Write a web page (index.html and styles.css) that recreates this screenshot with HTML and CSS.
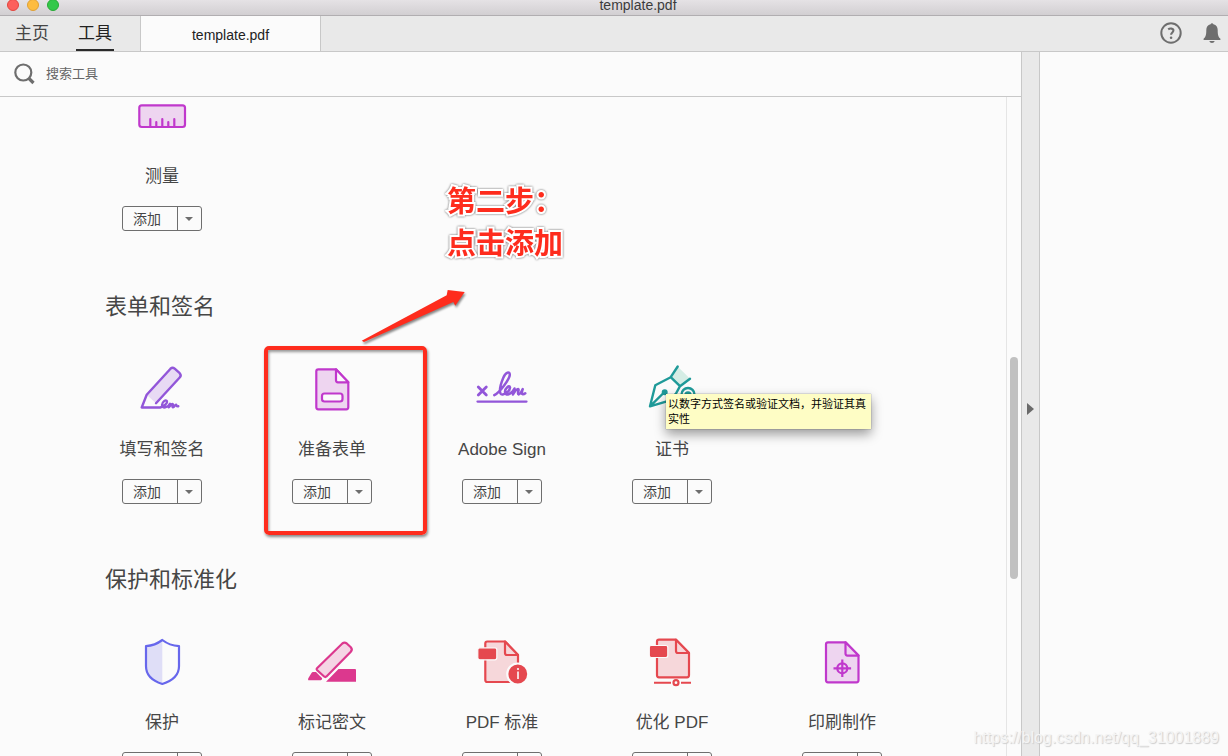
FILE: index.html
```html
<!DOCTYPE html>
<html lang="zh-CN">
<head>
<meta charset="utf-8">
<title>template.pdf</title>
<link rel="stylesheet" href="styles.css">
</head>
<body>
<div class="window">
  <header class="titlebar">
    <div class="lights">
      <button class="light close" aria-label="关闭"></button>
      <button class="light minimize" aria-label="最小化"></button>
      <button class="light expand" aria-label="缩放"></button>
    </div>
    <span class="window-title">template.pdf</span>
  </header>
  <nav class="tabbar">
    <button class="nav-tab">主页</button>
    <button class="nav-tab current"><span>工具</span></button>
    <button class="doc-tab">template.pdf</button>
    <div class="actions">
      <button class="icon-button" aria-label="帮助">
        <svg width="22" height="22" viewBox="0 0 22 22" fill="none" stroke="#6e6e6e" stroke-width="2"><circle cx="11" cy="11" r="9.700"/><path d="M8.200 7.400c1.800-1.400 5.200-1 5.200 1.200 0 1.800-2.300 1.900-2.300 4.200" stroke-width="2.100"/><circle cx="11.100" cy="15.700" r="1.300" fill="#6e6e6e" stroke="none"/></svg>
      </button>
      <button class="icon-button" aria-label="通知">
        <svg width="18" height="22" viewBox="0 0 18 22" fill="#6e6e6e"><path d="M7.600 2.300a1.500 1.500 0 0 1 2.800 0c2.900.7 4.300 2.800 4.300 5.700 0 4.900.6 7.200 2.700 8.700V18H.6v-1.300C2.700 15.200 3.300 12.900 3.300 8c0-2.900 1.400-5 4.300-5.700z"/><path d="M6.300 19h5.400c-.4 1.200-1.400 2-2.700 2s-2.300-.8-2.700-2z"/></svg>
      </button>
    </div>
  </nav>
  <div class="workspace">
    <main class="tools">
      <label class="search">
        <svg width="22" height="22" viewBox="0 0 22 22" fill="none" stroke="#6e6e6e"><circle cx="9.300" cy="9.500" r="8" stroke-width="2.200"/><path d="M14.500 15l5 5" stroke-width="3.200"/></svg>
        <input class="search-box" type="text" placeholder="搜索工具" aria-label="搜索工具">
      </label>
      <div class="scroller">
        <div class="catalog">
          <section class="grid">
            <article class="tool">
              <svg class="tool-icon" viewBox="0 0 56 50" fill="none" stroke="#c038cc" stroke-width="2.200" stroke-linecap="round"><rect x="5.300" y="14.300" width="45.700" height="21.700" rx="2.500" fill="#eed5f0"/><path d="M16.300 28v7M22.300 31v4M28.300 28v7M34.300 31v4M40.300 28v7"/></svg>
              <h3 class="tool-name">测量</h3>
              <div class="split"><button class="add">添加</button><button class="more" aria-label="更多选项"></button></div>
            </article>
          </section>
          <h2 class="section-title">表单和签名</h2>
          <section class="grid">
            <article class="tool">
              <svg class="tool-icon" viewBox="0 0 56 50" fill="none" stroke="#9256d9" stroke-width="2.400" stroke-linecap="round" stroke-linejoin="round"><path d="M12.700 30.800L36.500 4.700q2-2 4.200 0l5 4.500q2 2.200 0 4.300L22 39.200z" fill="#e8daf4" stroke="none"/><path d="M22 39.200l23.700-25.700q2-2.100 0-4.300l-5-4.500q-2.200-2-4.200 0L12.700 30.800l-5 12.700h18.500c4-1 7.500-4.300 6.800-6.300-1-2.300-5 .8-5 3.800 0 4.200 6 2.500 8-1.300l-1.200 3.600c1-1.300 2.500-3.300 3.700-3.300s-.8 3 .5 3.300c1.200.2 1.800-2.600 3-2.600.8 0 .1 2 2.300 1.600"/></svg>
              <h3 class="tool-name">填写和签名</h3>
              <div class="split"><button class="add">添加</button><button class="more" aria-label="更多选项"></button></div>
            </article>
            <article class="tool">
              <svg class="tool-icon" viewBox="0 0 56 50" fill="none" stroke="#c038cc" stroke-width="2.200" stroke-linejoin="round"><path d="M14.300 5.300H32l12.300 13v25q0 2-2 2h-28q-2 0-2-2v-36q0-2 2-2z" fill="#eed5f0"/><path d="M32 5.300v11q0 2 2 2h10.300z" fill="#fbfbfb"/><rect x="18" y="29.500" width="20.500" height="8" rx="2.500" fill="#fbfbfb"/></svg>
              <h3 class="tool-name">准备表单</h3>
              <div class="split"><button class="add">添加</button><button class="more" aria-label="更多选项"></button></div>
              <div class="highlight"></div>
            </article>
            <article class="tool">
              <svg class="tool-icon" viewBox="0 0 56 50" fill="none" stroke="#9256d9" stroke-width="2.500" stroke-linecap="round" stroke-linejoin="round"><path d="M4.300 23l8 8M12.300 23l-8 8" stroke-width="2.800"/><path d="M3.500 37.600h49" stroke-width="2.300"/><path d="M20.300 31.200c6-3.500 15.500-16.500 15.500-20.500 0-3.700-4-2.700-6.500 3-2.500 6-4.300 12.500-2.800 15.800 1.800 3.200 10-2.500 9.500-6.300-.6-2.400-5 .8-5 4.600 0 4.700 6.500 3 9.500-3.300l-1.500 6c1.500-2.600 3.800-5.600 5.300-5.400 1.200.3-1.500 4.800.2 5.300 1.600.3 3-3.200 4.200-5.300-.5 2-1.600 5 0 5.200 1.200.1 1.800-.3 2.600-1"/></svg>
              <h3 class="tool-name">Adobe Sign</h3>
              <div class="split"><button class="add">添加</button><button class="more" aria-label="更多选项"></button></div>
            </article>
            <article class="tool">
              <svg class="tool-icon" viewBox="0 0 56 50" fill="none" stroke="#1f9a99" stroke-width="2.400" stroke-linecap="round" stroke-linejoin="round"><path d="M26.700 13.200L33.700 2.500 46 14.800l-10 7.400z" fill="#d5ede5" stroke="none"/><path d="M33.700 2.500l-7 10.700 9.300 9 10-7.400M26.700 13.200l-15.400 8L6 42.300l18.500-5.500L32 29.500l4-7.300M6 42.300l14-13.800"/><circle cx="20.700" cy="28.200" r="1.800" fill="#1f9a99"/><circle cx="44" cy="30.500" r="6.500"/><circle cx="44" cy="31" r="2.500" fill="#1f9a99"/></svg>
              <h3 class="tool-name">证书</h3>
              <div class="split"><button class="add">添加</button><button class="more" aria-label="更多选项"></button></div>
              <div class="tooltip" role="tooltip">以数字方式签名或验证文档，并验证其真实性</div>
            </article>
          </section>
          <h2 class="section-title">保护和标准化</h2>
          <section class="grid">
            <article class="tool">
              <svg class="tool-icon" viewBox="0 0 56 50" fill="none"><path d="M28.300 3Q21 8.500 12 9.200v20C12 38 19 44 28.300 47z" fill="#dfdef7"/><path d="M28.300 3Q21 8.500 12 9.200v20C12 38 19 44 28.300 47 37.500 44 45 38 45 29.200v-20Q35.500 8.500 28.300 3z" stroke="#6767ec" stroke-width="2.200" stroke-linejoin="round"/></svg>
              <h3 class="tool-name">保护</h3>
              <div class="split"><button class="add">添加</button><button class="more" aria-label="更多选项"></button></div>
            </article>
            <article class="tool">
              <svg class="tool-icon" viewBox="0 0 56 50" fill="#dc388e"><path d="M7.500 36q.5-1 1.500-1h3l6.200 6.300q-.2 2-1.500 2H4.300q-.7-1.300.3-2.600zM22 44.800L34.500 32H51q1 0 1 1v11.800z"/><path d="M13 31.200L38.300 6.500q2.200-1.600 4.500 0l4 3.800q2 2.200 0 4.500L22.500 39.500q-1.200 1-2.400 0L13 33q-.8-1 0-1.800z" fill="#f5d5e5" stroke="#dc388e" stroke-width="2.200"/></svg>
              <h3 class="tool-name">标记密文</h3>
              <div class="split"><button class="add">添加</button><button class="more" aria-label="更多选项"></button></div>
            </article>
            <article class="tool">
              <svg class="tool-icon" viewBox="0 0 56 50" fill="none" stroke="#e5484f" stroke-width="2.200" stroke-linejoin="round"><path d="M13.300 4.500H31l13 13.500V45H13.300q-2 0-2-2V6.500q0-2 2-2z" fill="#f6d7da"/><path d="M31 4.500v11.500q0 2 2 2h11z" fill="#f6d7da"/><rect x="3.800" y="10.800" width="19" height="12" rx="2" fill="#e5484f" stroke="#fbfbfb" stroke-width="1.200"/><circle cx="43.800" cy="37" r="10.500" fill="#e5484f" stroke="#fbfbfb"/><path d="M44 34.500V42" stroke="#fbfbfb" stroke-width="1.600"/><circle cx="44" cy="32" r="1.100" fill="#fbfbfb" stroke="none"/></svg>
              <h3 class="tool-name">PDF 标准</h3>
              <div class="split"><button class="add">添加</button><button class="more" aria-label="更多选项"></button></div>
            </article>
            <article class="tool">
              <svg class="tool-icon" viewBox="0 0 56 50" fill="none" stroke="#e5484f" stroke-width="2.200" stroke-linejoin="round"><path d="M15 2.700h17L45 16v22.300q0 2-2 2H15q-2 0-2-2V4.700q0-2 2-2z" fill="#f6d7da"/><path d="M32 2.700V14q0 2 2 2h11z" fill="#f6d7da"/><rect x="5.300" y="8.500" width="18.500" height="12" rx="2" fill="#e5484f" stroke="#fbfbfb" stroke-width="1.200"/><path d="M10 45.700h17M37 45.700h10" stroke-width="2"/><circle cx="32" cy="45.700" r="2.500"/></svg>
              <h3 class="tool-name">优化 PDF</h3>
              <div class="split"><button class="add">添加</button><button class="more" aria-label="更多选项"></button></div>
            </article>
            <article class="tool">
              <svg class="tool-icon" viewBox="0 0 56 50" fill="none" stroke="#c038cc" stroke-width="2.200" stroke-linejoin="round"><path d="M14 5.300h17.500l13 13.300v24.700q0 2-2 2H14q-2 0-2-2v-36q0-2 2-2z" fill="#eed5f0"/><path d="M31.500 5.300v11.300q0 2 2 2h11z" fill="#eed5f0"/><circle cx="28.300" cy="31.300" r="5"/><path d="M28.300 22.500v17.600M19.500 31.300h17.600"/></svg>
              <h3 class="tool-name">印刷制作</h3>
              <div class="split"><button class="add">添加</button><button class="more" aria-label="更多选项"></button></div>
            </article>
          </section>
        </div>
        <div class="track"><div class="thumb"></div></div>
      </div>
    </main>
    <button class="divider" aria-label="展开窗格"><svg width="7" height="12" viewBox="0 0 7 12"><path d="M0 0l7 6-7 6z" fill="#6a6a6a"/></svg></button>
    <aside class="pane"></aside>
  </div>
  <p class="note">第二步：<br>点击添加</p>
  <svg class="pointer" width="110" height="60" viewBox="0 0 110 60"><path d="M1.700 52.700L86.700 7.300 87.700 2l17 2-9.400 13.700-2-3.700L4 54z" fill="#fe2c1d"/></svg>
  <span class="watermark">https://blog.csdn.net/qq_31001889</span>
</div>
</body>
</html>
```
FILE: styles.css
```css
* { box-sizing: border-box; }

body {
  margin: 0;
  font-family: "Liberation Sans", "Noto Sans CJK SC", sans-serif;
  color: #464646;
  background: #fbfbfb;
}

button {
  margin: 0;
  padding: 0;
  border: 0;
  background: none;
  font: inherit;
  color: inherit;
}

.window {
  position: relative;
  display: flex;
  flex-direction: column;
  height: 100vh;
  overflow: hidden;
}

/* Title bar */
.titlebar {
  display: grid;
  grid-template-columns: 1fr auto 1fr;
  height: 16px;
  padding: 0 7px;
  background: linear-gradient(#e5e2e5, #d2cfd2);
  border-bottom: 1px solid #b1aeb1;
}

.lights {
  display: flex;
  gap: 8px;
  margin-top: -1px;
}

.light {
  width: 12px;
  height: 12px;
  border: 1px solid;
  border-radius: 50%;
}

.close { background: #fc605c; border-color: #e2463f; }
.minimize { background: #fdbc40; border-color: #dfa035; }
.expand { background: #34c84a; border-color: #27aa35; }

.window-title {
  grid-column: 2;
  padding-left: 48px;
  font-size: 14px;
  line-height: 11px;
  color: #3c3c3c;
}

/* Tabs */
.tabbar {
  display: flex;
  height: 36px;
  background: #e9e9e9;
  border-bottom: 1px solid #c8c8c8;
}

.nav-tab {
  width: 64px;
  height: 35px;
  font-size: 17px;
  line-height: 34px;
}

.nav-tab.current {
  width: 76px;
  padding-right: 14px;
  color: #222;
}

.nav-tab.current span {
  display: block;
  width: 38px;
  height: 35px;
  margin: 0 auto;
  line-height: 35px;
  border-bottom: 2px solid #2a2a2a;
}

.doc-tab {
  width: 181px;
  padding-top: 2px;
  font-size: 14px;
  color: #222;
  background: #fbfbfb;
  border: solid #c8c8c8;
  border-width: 0 1px;
}

.actions {
  display: flex;
  align-items: center;
  gap: 21px;
  margin-left: auto;
  padding: 0 7px 2px 0;
}

.icon-button { display: flex; }

/* Work area */
.workspace {
  display: flex;
  flex: 1;
  min-height: 0;
}

.tools {
  display: flex;
  flex: 1;
  flex-direction: column;
  min-width: 0;
}

.search {
  display: flex;
  flex: none;
  align-items: center;
  gap: 10px;
  height: 45px;
  padding-left: 14px;
  border-bottom: 1px solid #c8c8c8;
}

.search-box {
  flex: 1;
  padding: 0 0 2px;
  border: 0;
  outline: 0;
  background: none;
  font: inherit;
  font-size: 13px;
}

.search-box::placeholder { color: #666; }

.scroller {
  display: flex;
  flex: 1;
  min-height: 0;
  overflow: hidden;
}

.catalog {
  flex: 1;
  margin-top: -6px;
  padding-left: 77px;
}

.grid {
  display: grid;
  grid-template-columns: repeat(auto-fill, 170px);
}

.section-title {
  margin: 60px 0 41px 28px;
  font-size: 22px;
  font-weight: 400;
  line-height: 32px;
}

.tool {
  position: relative;
  display: flex;
  flex-direction: column;
  align-items: center;
}

.tool-icon {
  width: 56px;
  height: 50px;
}

.tool-name {
  margin: 24px 0 17px;
  font-size: 17px;
  font-weight: 400;
  line-height: 24px;
}

.split {
  display: flex;
  width: 80px;
  height: 25px;
  border: 1px solid #6e6e6e;
  border-radius: 3px;
}

.add {
  flex: 1;
  padding: 2px 6px 0 0;
  font-size: 14px;
  line-height: 21px;
}

.more {
  display: flex;
  align-items: center;
  justify-content: center;
  width: 24px;
  padding-right: 1px;
  border-left: 1px solid #6e6e6e;
}

.more::before {
  content: "";
  border: solid transparent;
  border-width: 4px 4px 0;
  border-top-color: #6e6e6e;
}

.track {
  width: 15px;
  padding: 260px 2px 0 3px;
  border-left: 1px solid #e5e5e5;
}

.thumb {
  width: 8px;
  height: 222px;
  border-radius: 4px;
  background: #c1c1c1;
}

.divider {
  display: flex;
  align-items: center;
  justify-content: center;
  width: 19px;
  padding: 10px 1px 0 0;
  background: #e9e9e9;
  border: solid #c8c8c8;
  border-width: 0 1px;
}

.pane { width: 188px; }

/* Overlays */
.highlight {
  position: absolute;
  top: -18px;
  left: 17px;
  width: 163px;
  height: 189px;
  border: 4px solid #fe2c1d;
  border-radius: 5px;
  box-shadow: 1px 2px 3px #0007, inset 1px 2px 3px #0006;
  pointer-events: none;
}

.tooltip {
  position: absolute;
  top: 30px;
  left: 79px;
  z-index: 1;
  width: 205px;
  padding: 3px 2px 2px;
  font-size: 11px;
  line-height: 15px;
  color: #000;
  background: #fefdc5;
  box-shadow: 0 0 1px #0008, 0 5px 12px #0006;
}

.note {
  position: absolute;
  top: 181px;
  left: 447px;
  margin: 0;
  font-size: 29px;
  font-weight: 700;
  line-height: 42px;
  color: #fe2c1d;
  -webkit-text-stroke: 4px #fff;
  paint-order: stroke fill;
  filter: drop-shadow(0 0 1px #0009);
}

.pointer {
  position: absolute;
  top: 288px;
  left: 360px;
  filter: drop-shadow(1px 2px 1px #0007);
}

.watermark {
  position: absolute;
  right: 9px;
  bottom: 8px;
  font-size: 16px;
  line-height: 20px;
  color: #f4f4f4;
  text-shadow: 1px 1px 1px #ccc;
}
```
